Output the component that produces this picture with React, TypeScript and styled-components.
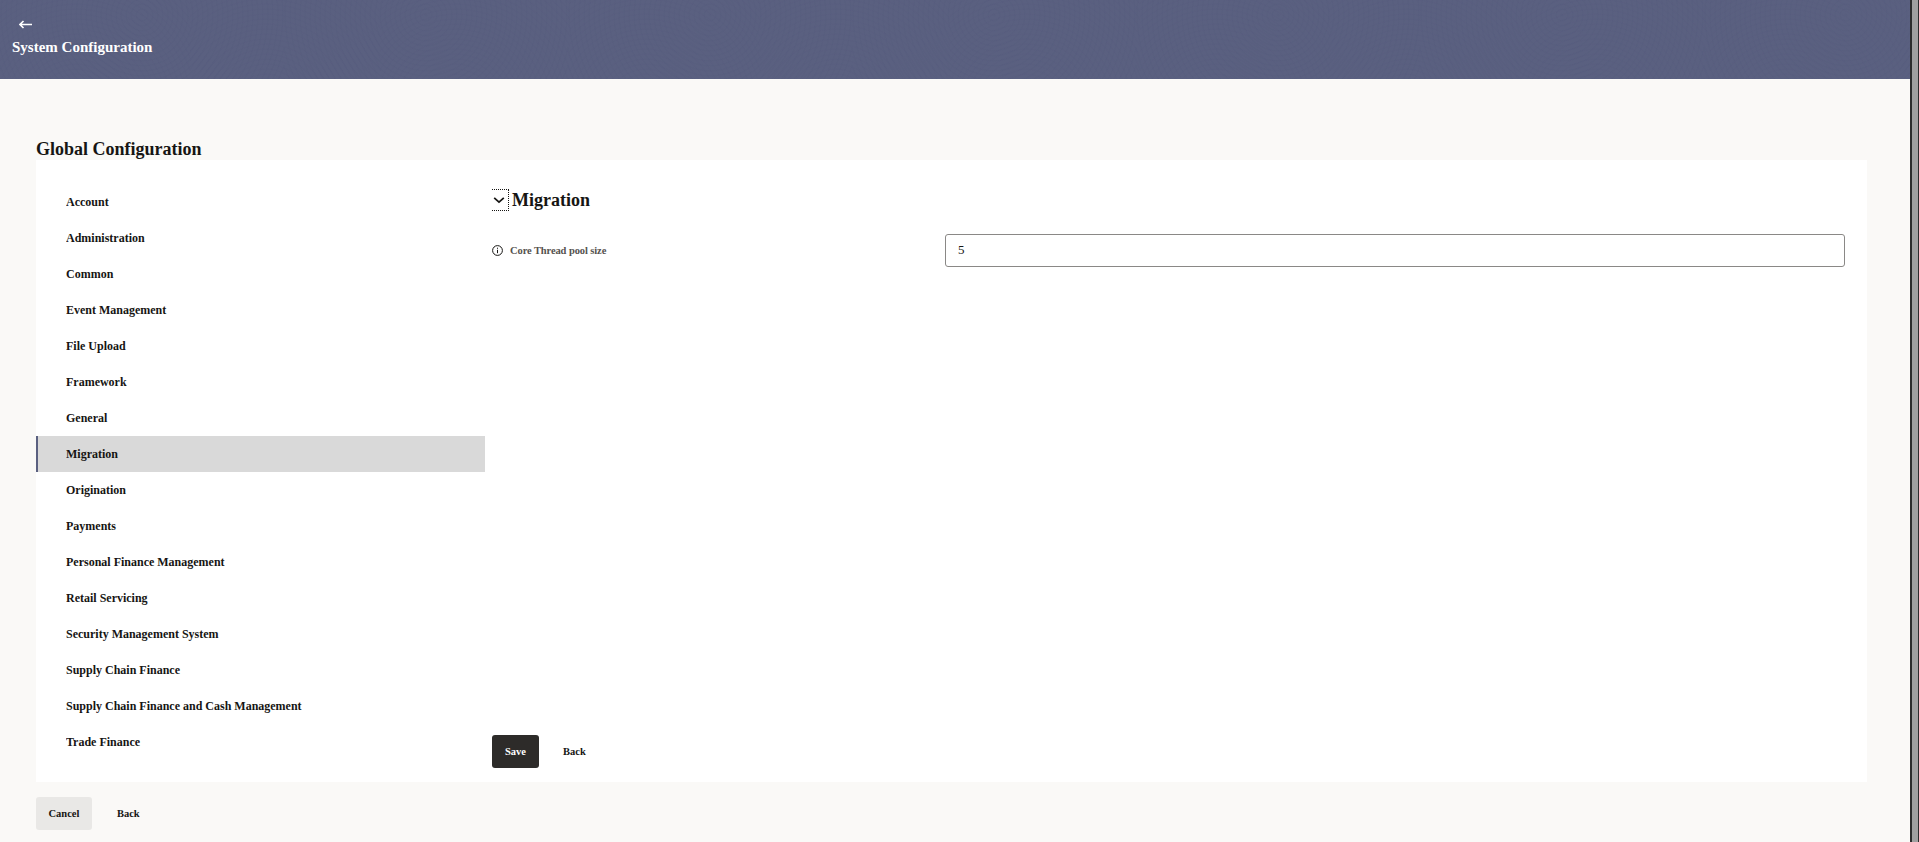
import React from 'react';
import styled, { createGlobalStyle } from 'styled-components';

const GlobalStyle = createGlobalStyle`
  *, *::before, *::after { box-sizing: border-box; }
  body {
    margin: 0;
    overflow: hidden;
    background: #faf9f7;
    color: #161513;
    font-family: 'Liberation Serif', 'Times New Roman', serif;
  }
`;

const Window = styled.div`
  display: flex;
  height: 842px;
`;

const Page = styled.div`
  flex: 1;
  min-width: 0;
`;

const Scrollbar = styled.div`
  width: 9px;
  background: #9f9f9f;
  border-left: 2px solid #2c2c2c;
  border-right: 1px solid #2c2c2c;
`;

const Header = styled.header`
  height: 79px;
  padding: 20px 12px 0;
  color: #fff;
  background-color: #5a6080;
  background-image:
    repeating-radial-gradient(circle at 50% 15px, rgba(80, 84, 120, 0.13) 0 1px, transparent 2px 5px),
    repeating-radial-gradient(circle at 40% 110px, rgba(80, 84, 120, 0.1) 0 1px, transparent 2px 5px);
  background-size: 284px 79px, 190px 79px;

  svg { display: block; margin-left: 7px; }
`;

const AppTitle = styled.h1`
  margin: 8px 0 0;
  font-size: 15px;
  line-height: 20px;
`;

const Content = styled.main`
  padding: 58px 43px 0 36px;
`;

const Heading = styled.h2<{ $offset?: number }>`
  margin: 0;
  padding-top: ${(p) => p.$offset ?? 0}px;
  font-size: 18px;
  line-height: 23px;
  height: 23px;
`;

const Panel = styled.section`
  display: flex;
  height: 622px;
  background: #fff;
`;

const Nav = styled.nav`
  width: 449px;
  padding-top: 24px;
`;

const NavItem = styled.div<{ $active: boolean }>`
  height: 36px;
  padding-left: 28px;
  border-left: 2px solid ${(p) => (p.$active ? '#5a6080' : 'transparent')};
  background: ${(p) => (p.$active ? '#d9d9d9' : 'transparent')};
  font-size: 13.3px;
  font-weight: 700;
  line-height: 35px;
`;

const NavText = styled.span`
  display: inline-block;
  transform: scaleX(0.902);
  transform-origin: left;
`;

const Detail = styled.div`
  flex: 1;
  display: flex;
  flex-direction: column;
  padding: 29px 22px 14px 7px;
`;

const DetailHeader = styled.div`
  display: flex;
  align-items: center;
  gap: 3px;
  height: 22px;
`;

const Toggle = styled.button`
  display: flex;
  align-items: center;
  width: 17px;
  height: 22px;
  padding: 0 0 0 1px;
  background: none;
  border: 1px dotted #161513;
  border-left: 0;
`;

const Field = styled.div`
  display: flex;
  align-items: center;
  height: 33px;
  margin-top: 23px;
`;

const Label = styled.label`
  display: flex;
  align-items: center;
  gap: 7px;
  width: 453px;
  padding-bottom: 1px;
  color: #55524e;
  font-size: 10.5px;
  font-weight: 700;
  letter-spacing: -0.1px;
`;

const Input = styled.input`
  flex: 1;
  height: 33px;
  padding: 0 12px 2px;
  border: 1px solid #8a8886;
  border-radius: 3px;
  background: #fff;
  color: #161513;
  font: 13px 'Liberation Serif', serif;
`;

const Actions = styled.div<{ $top?: string }>`
  display: flex;
  margin-top: ${(p) => p.$top ?? 'auto'};
`;

const Button = styled.button<{ $kind: 'primary' | 'muted' | 'plain' }>`
  height: 33px;
  padding: 0 ${(p) => (p.$kind === 'muted' ? '12.5px' : '13px')};
  margin-right: ${(p) => (p.$kind === 'muted' ? '12px' : '11px')};
  border: 0;
  border-radius: 3px;
  background: ${(p) => ({ primary: '#2d2b29', muted: '#e9e8e6', plain: 'transparent' })[p.$kind]};
  color: ${(p) => (p.$kind === 'primary' ? '#fff' : '#161513')};
  font: 700 10.5px 'Liberation Serif', serif;
`;

const SECTIONS = [
  'Account', 'Administration', 'Common', 'Event Management', 'File Upload', 'Framework',
  'General', 'Migration', 'Origination', 'Payments', 'Personal Finance Management',
  'Retail Servicing', 'Security Management System', 'Supply Chain Finance',
  'Supply Chain Finance and Cash Management', 'Trade Finance',
];

const BackArrow = () => (
  <svg width="13" height="9" viewBox="0 0 13 9" fill="none" stroke="currentColor" strokeWidth="1.6">
    <path d="M13 4.5H1M4.5 1L1 4.5L4.5 8" />
  </svg>
);

const Chevron = () => (
  <svg width="12" height="8" viewBox="0 0 12 8" fill="none" stroke="#161513" strokeWidth="1.7">
    <path d="M1.2 1.8L6 6.2L10.8 1.8" />
  </svg>
);

const InfoIcon = () => (
  <svg width="11" height="11" viewBox="0 0 11 11" fill="none" stroke="#161513">
    <circle cx="5.5" cy="5.5" r="4.9" strokeWidth="1" />
    <path d="M5.5 4.8V8.2M5.5 2.7V3.8" strokeWidth="1" />
  </svg>
);

export default function App() {
  return (
    <Window>
      <GlobalStyle />
      <Page>
        <Header>
          <BackArrow />
          <AppTitle>System Configuration</AppTitle>
        </Header>
        <Content>
          <Heading $offset={1}>Global Configuration</Heading>
          <Panel>
            <Nav>
              {SECTIONS.map((name) => (
                <NavItem key={name} $active={name === 'Migration'}>
                  <NavText>{name}</NavText>
                </NavItem>
              ))}
            </Nav>
            <Detail>
              <DetailHeader>
                <Toggle aria-label="Collapse"><Chevron /></Toggle>
                <Heading>Migration</Heading>
              </DetailHeader>
              <Field>
                <Label htmlFor="pool"><InfoIcon />Core Thread pool size</Label>
                <Input id="pool" defaultValue="5" />
              </Field>
              <Actions>
                <Button $kind="primary">Save</Button>
                <Button $kind="plain">Back</Button>
              </Actions>
            </Detail>
          </Panel>
          <Actions $top="15px">
            <Button $kind="muted">Cancel</Button>
            <Button $kind="plain">Back</Button>
          </Actions>
        </Content>
      </Page>
      <Scrollbar />
    </Window>
  );
}
